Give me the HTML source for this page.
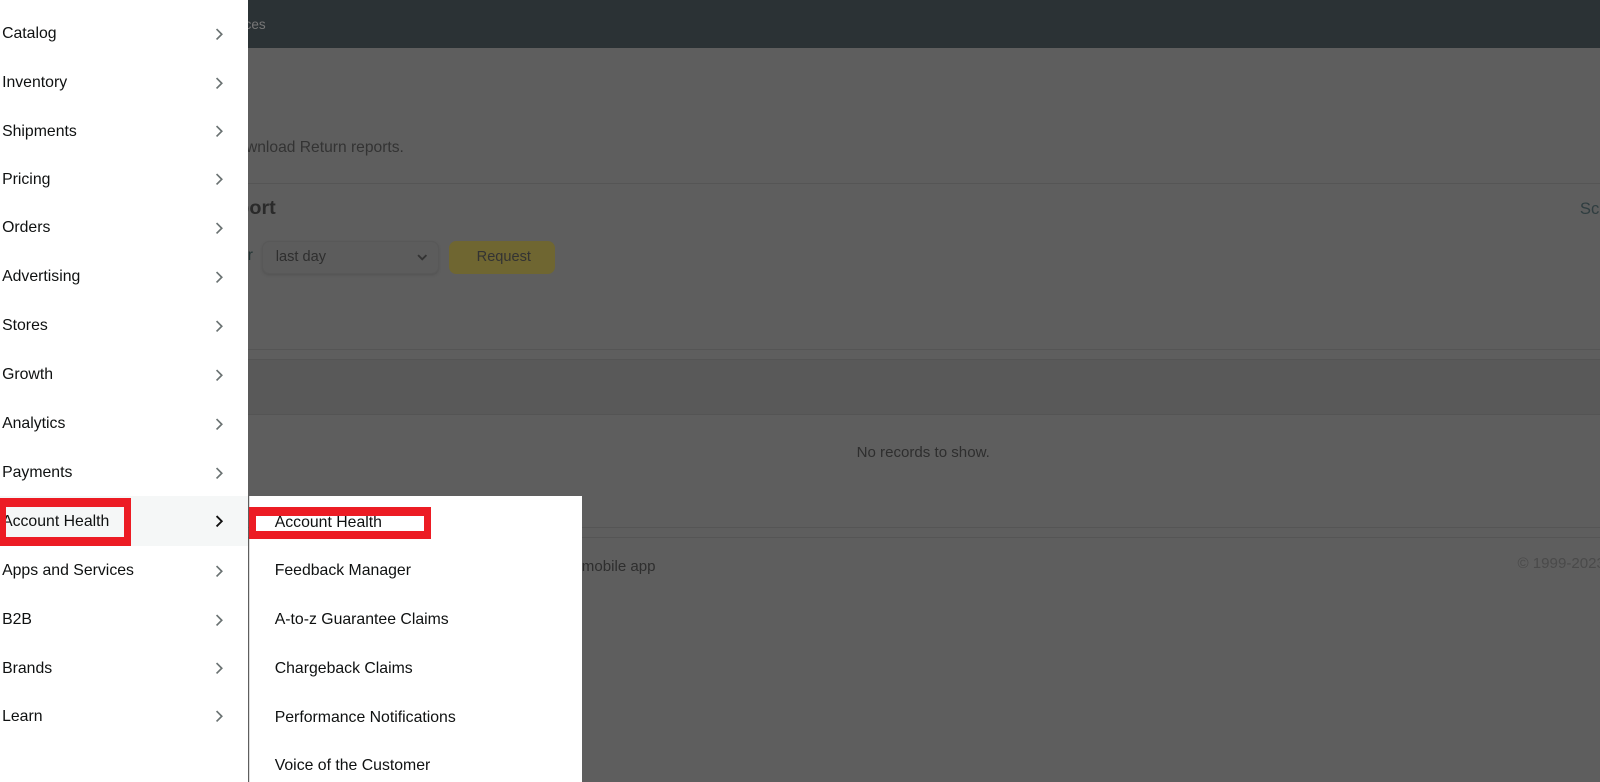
<!DOCTYPE html>
<html><head><meta charset="utf-8"><style>
*{margin:0;padding:0;box-sizing:border-box}
html,body{width:1600px;height:782px;overflow:hidden;background:#5e5e5e}
#w{zoom:1.0408;width:1538px;height:752px;position:relative;font-family:"Liberation Sans",sans-serif;color:#0f1111}
.abs{position:absolute}
.hdr{left:0;top:0;width:1538px;height:46px;background:#2b3235}
.t{position:absolute;white-space:nowrap}
.line{position:absolute;left:238px;width:1300px;height:1px;background:#555}
.menu{left:0;top:0;width:238px;height:752px;background:#fff}
.item{position:absolute;left:0;width:238px;height:47px;font-size:15.2px;color:#0f1111}
.item span{position:absolute;left:2px;top:50%;transform:translateY(-50%)}
.item svg{position:absolute;left:207px;top:50%;margin-top:-6px}
.sub{left:239px;top:477px;width:320px;height:289px;background:#fff;border-left:1px solid #ddd}
.si{position:absolute;left:24px;font-size:15.2px;color:#0f1111}
</style></head><body><div id="w">
<div class="abs hdr"></div>
<div class="t" style="left:235px;top:16px;color:#777;font-size:13px">ces</div>
<div class="t" style="left:228px;top:134px;color:#333;font-size:15px">ownload Return reports.</div>
<div class="line" style="top:176px"></div>
<div class="t" style="left:228px;top:189px;color:#2a2a2a;font-size:19px;font-weight:bold">port</div>
<div class="t" style="left:1518px;top:191px;color:#2f3d40;font-size:16px">Sc</div>
<div class="t" style="left:238px;top:237px;color:#233;font-size:15px">r</div>
<div class="abs" style="left:252px;top:232px;width:170px;height:31px;border:1px solid #585858;border-radius:7px;background:#5c5c5c;box-shadow:0 1px 2px #555"></div>
<div class="t" style="left:265px;top:239px;color:#2e2e2e;font-size:14px">last day</div>
<svg class="abs" style="left:400px;top:242px" width="12" height="10"><path d="M2 3l4 4 4-4" stroke="#333" stroke-width="1.8" fill="none"/></svg>
<div class="abs" style="left:431px;top:232px;width:102px;height:31px;border-radius:7px;background:#6f6631"></div>
<div class="t" style="left:458px;top:239px;color:#333;font-size:14px">Request</div>
<div class="line" style="top:335px"></div>
<div class="abs" style="left:238px;top:345px;width:1300px;height:54px;background:#595959;border-top:1px solid #545454;border-bottom:1px solid #545454"></div>
<div class="t" style="left:823px;top:427px;color:#2e2e2e;font-size:14.5px">No records to show.</div>
<div class="line" style="top:506px"></div>
<div class="line" style="top:516px"></div>
<div class="t" style="left:559px;top:536px;color:#2e2e2e;font-size:14.5px">mobile app</div>
<div class="t" style="left:1458px;top:533px;color:#4a4a4a;font-size:14.5px">© 1999-2023</div>

<div class="abs menu">
<div class="item" style="top:9px"><span>Catalog</span><svg width="8" height="12"><path d="M1.5 1l5 5-5 5" stroke="#6a7272" stroke-width="1.6" fill="none"/></svg></div>
<div class="item" style="top:56px"><span>Inventory</span><svg width="8" height="12"><path d="M1.5 1l5 5-5 5" stroke="#6a7272" stroke-width="1.6" fill="none"/></svg></div>
<div class="item" style="top:103px"><span>Shipments</span><svg width="8" height="12"><path d="M1.5 1l5 5-5 5" stroke="#6a7272" stroke-width="1.6" fill="none"/></svg></div>
<div class="item" style="top:149px"><span>Pricing</span><svg width="8" height="12"><path d="M1.5 1l5 5-5 5" stroke="#6a7272" stroke-width="1.6" fill="none"/></svg></div>
<div class="item" style="top:196px"><span>Orders</span><svg width="8" height="12"><path d="M1.5 1l5 5-5 5" stroke="#6a7272" stroke-width="1.6" fill="none"/></svg></div>
<div class="item" style="top:243px"><span>Advertising</span><svg width="8" height="12"><path d="M1.5 1l5 5-5 5" stroke="#6a7272" stroke-width="1.6" fill="none"/></svg></div>
<div class="item" style="top:290px"><span>Stores</span><svg width="8" height="12"><path d="M1.5 1l5 5-5 5" stroke="#6a7272" stroke-width="1.6" fill="none"/></svg></div>
<div class="item" style="top:337px"><span>Growth</span><svg width="8" height="12"><path d="M1.5 1l5 5-5 5" stroke="#6a7272" stroke-width="1.6" fill="none"/></svg></div>
<div class="item" style="top:384px"><span>Analytics</span><svg width="8" height="12"><path d="M1.5 1l5 5-5 5" stroke="#6a7272" stroke-width="1.6" fill="none"/></svg></div>
<div class="item" style="top:431px"><span>Payments</span><svg width="8" height="12"><path d="M1.5 1l5 5-5 5" stroke="#6a7272" stroke-width="1.6" fill="none"/></svg></div>
<div class="item" style="top:477px;height:48px;background:#f5f7f7"><span style="margin-top:1px">Account Health</span><svg width="8" height="12"><path d="M1.5 1l5 5-5 5" stroke="#111" stroke-width="1.8" fill="none"/></svg></div>
<div class="item" style="top:525px"><span>Apps and Services</span><svg width="8" height="12"><path d="M1.5 1l5 5-5 5" stroke="#6a7272" stroke-width="1.6" fill="none"/></svg></div>
<div class="item" style="top:572px"><span>B2B</span><svg width="8" height="12"><path d="M1.5 1l5 5-5 5" stroke="#6a7272" stroke-width="1.6" fill="none"/></svg></div>
<div class="item" style="top:619px"><span>Brands</span><svg width="8" height="12"><path d="M1.5 1l5 5-5 5" stroke="#6a7272" stroke-width="1.6" fill="none"/></svg></div>
<div class="item" style="top:665px"><span>Learn</span><svg width="8" height="12"><path d="M1.5 1l5 5-5 5" stroke="#6a7272" stroke-width="1.6" fill="none"/></svg></div>
</div>
<div class="abs" style="left:0;top:478px;width:126px;height:47px;border:7px solid #ec1c24;border-top-width:9px;border-bottom-width:9px;border-left-width:6px"></div>

<div class="abs sub">
<div class="si" style="top:17px">Account Health</div>
<div class="si" style="top:63px">Feedback Manager</div>
<div class="si" style="top:110px">A-to-z Guarantee Claims</div>
<div class="si" style="top:157px">Chargeback Claims</div>
<div class="si" style="top:204px">Performance Notifications</div>
<div class="si" style="top:250px">Voice of the Customer</div>
</div>
<div class="abs" style="left:239px;top:487px;width:175px;height:31px;border:7px solid #ec1c24;border-top-width:9px;border-bottom-width:8px"></div>
</div></body></html>
